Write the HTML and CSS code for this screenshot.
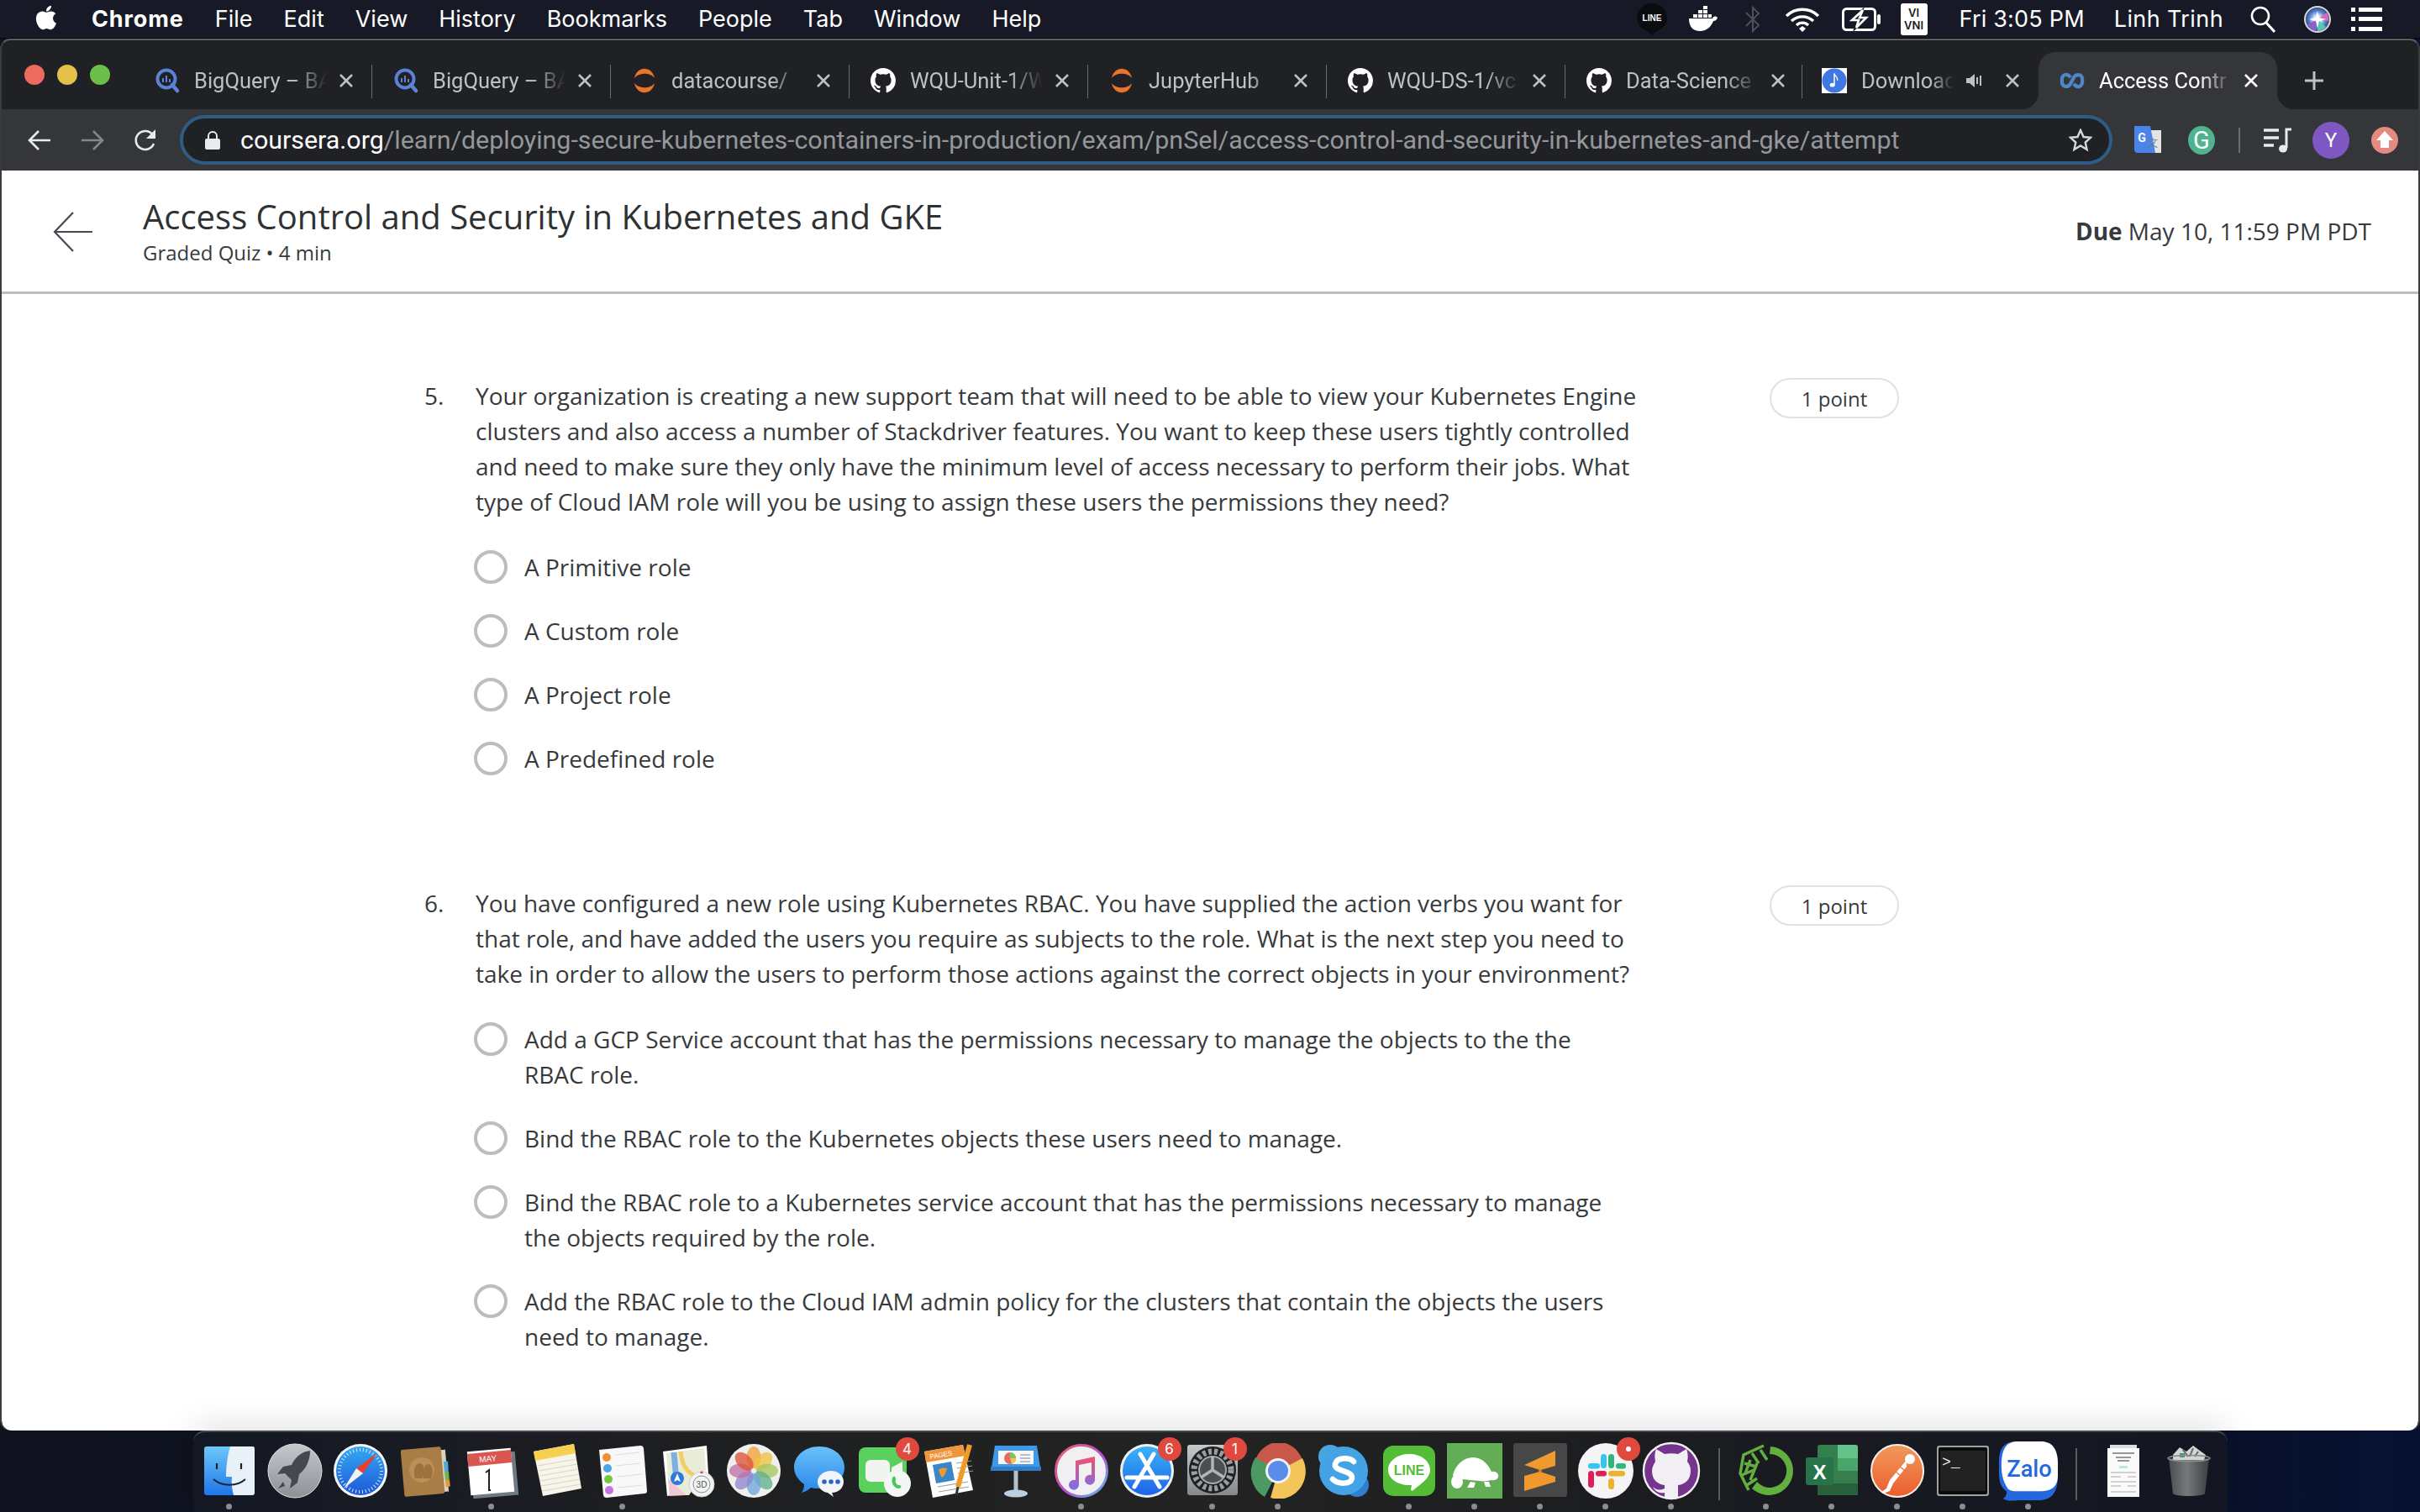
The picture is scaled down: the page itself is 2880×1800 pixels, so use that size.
FILE: index.html
```html
<!DOCTYPE html>
<html lang="en">
<head>
    <meta charset="UTF-8">
    <title>Access Control and Security in Kubernetes and GKE</title>
    <link rel="stylesheet" href="styles.css">
</head>
<body>

    <svg class="sprite">
        <symbol id="gh" viewBox="0 0 16 16"><path fill-rule="evenodd" d="M8 0C3.58 0 0 3.58 0 8c0 3.54 2.29 6.53 5.47 7.59.4.07.55-.17.55-.38 0-.19-.01-.82-.01-1.49-2.01.37-2.53-.49-2.69-.94-.09-.23-.48-.94-.82-1.13-.28-.15-.68-.52-.01-.53.63-.01 1.08.58 1.23.82.72 1.21 1.87.87 2.33.66.07-.52.28-.87.51-1.07-1.78-.2-3.64-.89-3.64-3.95 0-.87.31-1.59.82-2.15-.08-.2-.36-1.02.08-2.12 0 0 .67-.21 2.2.82.64-.18 1.32-.27 2-.27.68 0 1.36.09 2 .27 1.53-1.04 2.2-.82 2.2-.82.44 1.1.16 1.92.08 2.12.51.56.82 1.27.82 2.15 0 3.07-1.87 3.75-3.65 3.95.29.25.54.73.54 1.48 0 1.07-.01 1.93-.01 2.2 0 .21.15.46.55.38A8.013 8.013 0 0016 8c0-4.42-3.58-8-8-8z"/></symbol>
        <symbol id="bq" viewBox="0 0 28 30"><circle cx="13" cy="13" r="10.5" fill="none" stroke="#5a83d8" stroke-width="4"/><path d="M20 20l6 7" stroke="#5a83d8" stroke-width="4.5" stroke-linecap="round"/><path d="M9 12v5M13 9v8M17 13v4" stroke="#5a83d8" stroke-width="2"/></symbol>
        <symbol id="jup" viewBox="0 0 30 30"><path d="M3 12C6-3 24-3 27 12 22 5 8 5 3 12zM3 18c3 15 21 15 24 0-5 7-19 7-24 0z" fill="#e9752c"/></symbol>
        <symbol id="close" viewBox="0 0 18 18"><path d="M2 2l14 14M16 2L2 16" stroke="currentColor" stroke-width="2.6"/></symbol>
    </svg>

    <header class="menubar">
        <svg class="apple" viewBox="0 0 24 24"><path fill="#fff" d="M17.05 20.28c-.98.95-2.05.8-3.08.35-1.09-.46-2.09-.48-3.24 0-1.44.62-2.2.44-3.06-.35C2.79 15.25 3.51 7.59 9.05 7.31c1.35.07 2.29.74 3.08.8 1.18-.24 2.31-.93 3.57-.84 1.51.12 2.65.72 3.4 1.8-3.12 1.87-2.38 5.98.48 7.13-.57 1.5-1.31 2.99-2.54 4.09zM12.03 7.25c-.15-2.23 1.66-4.07 3.74-4.25.29 2.58-2.34 4.5-3.74 4.25z"/></svg>
        <nav class="menu-items">
            <span class="app-name">Chrome</span>
            <span>File</span>
            <span>Edit</span>
            <span>View</span>
            <span>History</span>
            <span>Bookmarks</span>
            <span>People</span>
            <span>Tab</span>
            <span>Window</span>
            <span>Help</span>
        </nav>
        <div class="status">
            <svg class="st st-line" viewBox="0 0 36 38"><path d="M18 0a18 17 0 0 1 6 33l-6 5-6-5A18 17 0 0 1 18 0z" fill="#0b0c10"/><text x="18" y="21" class="st-line-text">LINE</text></svg>
            <svg class="st st-docker" viewBox="0 0 36 32"><path fill="#fff" d="M1 15h28c1-3 4-3 6-1-1 3-3 4-5 4-3 8-9 12-16 12C6 30 1 25 1 15z"/><path fill="#fff" d="M6 10h5v4H6zM12 10h5v4h-5zM18 10h5v4h-5zM12 5h5v4h-5zM18 5h5v4h-5zM18 0h5v4h-5zM24 10h4v4h-4z"/></svg>
            <svg class="st st-bt" viewBox="0 0 20 32"><path d="M2 8l15 15-7 7V2l7 7L2 24" fill="none" stroke="#4d505a" stroke-width="2"/></svg>
            <svg class="st st-wifi" viewBox="0 0 42 30"><path d="M2 11a27 27 0 0 1 38 0M8 17a19 19 0 0 1 26 0M14 22a10 10 0 0 1 14 0" fill="none" stroke="#fff" stroke-width="3.4"/><path d="M17 26l4-3 4 3-4 4z" fill="#fff"/></svg>
            <svg class="st st-batt" viewBox="0 0 46 28"><rect x="1.500" y="1.500" width="38" height="25" rx="4" fill="none" stroke="#fff" stroke-width="3"/><rect x="42" y="8" width="4" height="12" rx="2" fill="#fff"/><path d="M27-1L8 16h9l-4 13 20-18h-10z" fill="#171a26"/><path d="M25 3L12 15h8l-3 9 12-12h-8z" fill="none" stroke="#fff" stroke-width="2.600"/></svg>
            <div class="vni"><span>VI</span><span>VNI</span></div>
            <span class="st-text st-clock">Fri 3:05 PM</span>
            <span class="st-text st-user">Linh Trinh</span>
            <svg class="st st-search" viewBox="0 0 30 32"><circle cx="12" cy="12" r="10" fill="none" stroke="#fff" stroke-width="2.6"/><path d="M19 20l10 11" stroke="#fff" stroke-width="3"/></svg>
            <svg class="st st-siri" viewBox="0 0 32 32"><defs><radialGradient id="siri"><stop offset="0" stop-color="#fff"/><stop offset=".3" stop-color="#d8e4f4"/><stop offset=".6" stop-color="#5f8fdc"/><stop offset="1" stop-color="#2e3e70"/></radialGradient></defs><circle cx="16" cy="16" r="15" fill="url(#siri)" stroke="#d7d8dc" stroke-width="2"/><path d="M16 16L27 8a14 14 0 0 1 2 10z" fill="#d86ab8"/><path d="M16 16L26 25a14 14 0 0 1-10 5z" fill="#58c8a8"/><path d="M16 16l-2 14A14 14 0 0 1 4 22z" fill="#8a62c8"/><path d="M16 6l2 8 8 2-8 2-2 8-2-8-8-2 8-2z" fill="#fff"/></svg>
            <svg class="st st-list" viewBox="0 0 37 30"><path fill="#fff" d="M0 1h5v5H0zM9 1h28v5H9zM0 12h5v5H0zM9 12h28v5H9zM0 24h5v5H0zM9 24h28v5H9z"/></svg>
        </div>
    </header>

    <div class="window">
        <div class="tabstrip">
            <div class="lights"><i class="red"></i><i class="yellow"></i><i class="green"></i></div>

            <div class="tab"><svg class="favicon"><use href="#bq"/></svg><span class="tab-title">BigQuery – BA</span><svg class="tab-close"><use href="#close"/></svg></div>
            <div class="tab"><svg class="favicon"><use href="#bq"/></svg><span class="tab-title">BigQuery – BA</span><svg class="tab-close"><use href="#close"/></svg></div>
            <div class="tab"><svg class="favicon"><use href="#jup"/></svg><span class="tab-title">datacourse/</span><svg class="tab-close"><use href="#close"/></svg></div>
            <div class="tab"><svg class="favicon gh-icon"><use href="#gh"/></svg><span class="tab-title">WQU-Unit-1/W</span><svg class="tab-close"><use href="#close"/></svg></div>
            <div class="tab"><svg class="favicon"><use href="#jup"/></svg><span class="tab-title">JupyterHub</span><svg class="tab-close"><use href="#close"/></svg></div>
            <div class="tab"><svg class="favicon gh-icon"><use href="#gh"/></svg><span class="tab-title">WQU-DS-1/vc</span><svg class="tab-close"><use href="#close"/></svg></div>
            <div class="tab tab-narrow"><svg class="favicon gh-icon"><use href="#gh"/></svg><span class="tab-title">Data-Science</span><svg class="tab-close"><use href="#close"/></svg></div>
            <div class="tab tab-audio">
                <svg class="favicon" viewBox="0 0 32 32"><rect width="32" height="32" fill="#fff"/><circle cx="16" cy="16" r="15.5" fill="#3f78e0"/><path d="M16 7v14" stroke="#fff" stroke-width="1.6"/><path d="M16 7c1 4 5 4 4 9" fill="none" stroke="#fff" stroke-width="1.4"/><ellipse cx="13.5" cy="21.5" rx="3.2" ry="2.5" fill="#fff"/></svg>
                <span class="tab-title">Download</span>
                <svg class="speaker" viewBox="0 0 20 20"><path d="M0 7h4l6-5v16l-6-5H0z" fill="#bdc1c6"/><path d="M13 6v8M17 4v12" stroke="#bdc1c6" stroke-width="2"/></svg>
                <svg class="tab-close"><use href="#close"/></svg>
            </div>
            <div class="tab active">
                <svg class="favicon" viewBox="0 0 32 20"><path d="M14 6C11 2 8 2 6 3 2 5 2 15 6 17c3 1 6 0 8-3M18 14c3 4 6 4 8 3 4-2 4-12 0-14-3-1-6 0-8 3L14 14" fill="none" stroke="#4f86c6" stroke-width="4.5"/></svg>
                <span class="tab-title">Access Contr</span>
                <svg class="tab-close"><use href="#close"/></svg>
            </div>
            <svg class="newtab" viewBox="0 0 24 24"><path d="M12 1v22M1 12h22" stroke="#bdc1c6" stroke-width="3"/></svg>
        </div>

        <div class="toolbar">
            <svg class="nav-btn" viewBox="0 0 28 26"><path d="M27 13H3M13 2L2 13l11 11" fill="none" stroke="#e8eaed" stroke-width="2.6"/></svg>
            <svg class="nav-btn dim" viewBox="0 0 28 26"><path d="M1 13h24M15 2l11 11-11 11" fill="none" stroke="#83868a" stroke-width="2.6"/></svg>
            <svg class="nav-btn" viewBox="0 0 28 28"><path d="M24 18a11 11 0 1 1-1-10" fill="none" stroke="#e8eaed" stroke-width="2.6"/><path d="M26 1v11H15z" fill="#e8eaed"/></svg>

            <div class="omnibox">
                <svg class="lock" viewBox="0 0 18 22"><path d="M4 9V6a5 5 0 0 1 10 0v3" fill="none" stroke="#e8eaed" stroke-width="2"/><rect y="9" width="18" height="13" rx="2" fill="#e8eaed"/></svg>
                <span class="url"><b>coursera.org</b>/learn/deploying-secure-kubernetes-containers-in-production/exam/pnSel/access-control-and-security-in-kubernetes-and-gke/attempt</span>
                <svg class="star" viewBox="0 0 28 28"><path d="M14 2l3.6 8 8.4.8-6.3 5.7 1.9 8.5L14 20.5 6.4 25l1.9-8.5L2 10.800l8.400-.8z" fill="none" stroke="#d5d7da" stroke-width="2.400"/></svg>
            </div>

            <div class="extensions">
                <svg class="ext ext-translate" viewBox="0 0 32 34"><rect x="12" y="5" width="20" height="27" fill="#e4e4e4"/><path d="M0 0h19l6 32H4a4 4 0 0 1-4-4z" fill="#4a84e8"/><text x="9" y="19" class="ext-g">G</text><text x="22" y="25" class="ext-t">文</text></svg>
                <span class="ext-grammarly">G</span>
                <i class="ext-sep"></i>
                <svg class="ext ext-queue" viewBox="0 0 34 30"><path d="M0 3h18M0 12h18M0 21h12" stroke="#e8eaed" stroke-width="3.600"/><path d="M27 24V2h6" fill="none" stroke="#e8eaed" stroke-width="3"/><ellipse cx="23" cy="25" rx="5" ry="4.500" fill="#e8eaed"/></svg>
                <span class="avatar">Y</span>
                <svg class="ext ext-up" viewBox="0 0 32 32"><circle cx="16" cy="16" r="16" fill="#e58a7e"/><path d="M16 5l10 11h-5v9H11v-9H6z" fill="#fff"/></svg>
            </div>
        </div>

        <div class="page">
            <div class="page-header">
                <svg class="back" viewBox="0 0 48 48"><path d="M47 24H2M24 1L2 24l22 23" fill="none" stroke="#454a52" stroke-width="2.200"/></svg>
                <div class="page-title">
                    <h1>Access Control and Security in Kubernetes and GKE</h1>
                    <p>Graded Quiz • 4 min</p>
                </div>
                <div class="due"><b>Due</b> May 10, 11:59 PM PDT</div>
            </div>

            <main class="quiz">
                <section class="question">
                    <div class="q-num">5.</div>
                    <div class="q-body">
                        <p class="q-text">Your organization is creating a new support team that will need to be able to view your Kubernetes Engine clusters and also access a number of Stackdriver features. You want to keep these users tightly controlled and need to make sure they only have the minimum level of access necessary to perform their jobs. What type of Cloud IAM role will you be using to assign these users the permissions they need?</p>
                        <div class="option"><i class="radio"></i><span>A Primitive role</span></div>
                        <div class="option"><i class="radio"></i><span>A Custom role</span></div>
                        <div class="option"><i class="radio"></i><span>A Project role</span></div>
                        <div class="option"><i class="radio"></i><span>A Predefined role</span></div>
                    </div>
                    <div class="points">1 point</div>
                </section>

                <section class="question">
                    <div class="q-num">6.</div>
                    <div class="q-body">
                        <p class="q-text">You have configured a new role using Kubernetes RBAC. You have supplied the action verbs you want for that role, and have added the users you require as subjects to the role. What is the next step you need to take in order to allow the users to perform those actions against the correct objects in your environment?</p>
                        <div class="option"><i class="radio"></i><span>Add a GCP Service account that has the permissions necessary to manage the objects to the the RBAC role.</span></div>
                        <div class="option"><i class="radio"></i><span>Bind the RBAC role to the Kubernetes objects these users need to manage.</span></div>
                        <div class="option"><i class="radio"></i><span>Bind the RBAC role to a Kubernetes service account that has the permissions necessary to manage the objects required by the role.</span></div>
                        <div class="option"><i class="radio"></i><span>Add the RBAC role to the Cloud IAM admin policy for the clusters that contain the objects the users need to manage.</span></div>
                    </div>
                    <div class="points">1 point</div>
                </section>
            </main>
        </div>
    </div>

    <footer class="dock">
        <div class="slot on"><svg viewBox="0 0 66 66"><defs><linearGradient id="fnd" x1="0" y1="0" x2="0" y2="1"><stop offset="0" stop-color="#6cc8f8"/><stop offset="1" stop-color="#1f76e8"/></linearGradient></defs><rect x="3" y="4" width="60" height="58" rx="3" fill="url(#fnd)"/><path d="M34 4h26a3 3 0 0 1 3 3v52a3 3 0 0 1-3 3H38c-2-8-3-14-2-22h-7c0-12 2-26 5-36z" fill="#e9f1f8"/><path d="M18 24v7M47 24v7" stroke="#222" stroke-width="2.200"/><path d="M14 43c10 9 28 9 38 0" fill="none" stroke="#16233c" stroke-width="2"/></svg></div>
        <div class="slot"><svg viewBox="0 0 66 66"><defs><linearGradient id="lp" x1="0" y1="0" x2="0" y2="1"><stop offset="0" stop-color="#c3c8cc"/><stop offset="1" stop-color="#8b9195"/></linearGradient></defs><circle cx="33" cy="33" r="32" fill="url(#lp)" stroke="#dfe2e4" stroke-width="1"/><path d="M51 9c-10 1-18 8-22 17l-10 2-7 9 9-1 8 8-2 10 9-7 2-10c8-6 13-16 13-28z" fill="#45484c"/><path d="M19 46l-6 8 8-3z" fill="#45484c"/></svg></div>
        <div class="slot"><svg viewBox="0 0 66 66"><defs><linearGradient id="sf" x1="0" y1="0" x2="0" y2="1"><stop offset="0" stop-color="#33a9f0"/><stop offset="1" stop-color="#1d58d8"/></linearGradient></defs><circle cx="33" cy="33" r="32" fill="#f4f6f8"/><circle cx="33" cy="33" r="29" fill="url(#sf)"/><circle cx="33" cy="33" r="25" fill="none" stroke="#dce9f8" stroke-width="4" stroke-dasharray="1 3"/><path d="M53 12L36 36 28 30z" fill="#e8402f"/><path d="M13 54l15-24 8 6z" fill="#f2f2f2"/></svg></div>
        <div class="slot"><svg viewBox="0 0 66 66"><rect x="48" y="8" width="10" height="50" fill="#d8d2bd" transform="rotate(-5 53 33)"/><path d="M54 22l5-.4.8 12-5 .4z" fill="#4fa8d8"/><path d="M55 34l5-.4.800 10-5 .4z" fill="#6cb54c"/><path d="M56 44l5-.4.800 8-5 .4z" fill="#e59a34"/><rect x="5" y="6" width="48" height="56" rx="2" fill="#a97d45" transform="rotate(-5 29 34)"/><circle cx="28" cy="32" r="15" fill="#ba8f58"/><path d="M20 42c-3-9 0-18 6-18 4 0 6 7 3 18zM30 42c-1-10 1-18 6-17 5 1 6 9 3 17z" fill="#9c733d"/></svg></div>
        <div class="slot on"><svg viewBox="0 0 66 66"><rect x="9" y="12" width="54" height="52" fill="#6e7a84" transform="rotate(-5 36 38)"/><rect x="6" y="8" width="52" height="52" fill="#fff" transform="rotate(-5 32 34)"/><path d="M4 13l52-5 1.300 15-52 5z" fill="#d9574f"/><text x="29" y="22" class="dock-text cal-month" transform="rotate(-5 29 22)">MAY</text><path d="M26 35l4-3v24h2" fill="none" stroke="#222" stroke-width="2"/></svg></div>
        <div class="slot"><svg viewBox="0 0 66 66"><path d="M5 10l48-9 9 53-46 9z" fill="#f7f4e9"/><path d="M5 10l48-9 2 11-48 9z" fill="#f6d14f"/><path d="M10 27l46-8M11 33l46-8M12 39l46-8M13 45l46-8M14 51l46-8M15 57l46-8" stroke="#d8d5c8" stroke-width="1.200"/></svg></div>
        <div class="slot on"><svg viewBox="0 0 66 66"><path d="M5 8l49-5a4 4 0 0 1 4 3l4 51a3 3 0 0 1-3 3L14 65a4 4 0 0 1-4-3z" fill="#f8f8f8"/><circle cx="14" cy="17" r="5" fill="#f09034"/><circle cx="15" cy="30" r="5" fill="#49a5e8"/><circle cx="16" cy="43" r="5" fill="#70c83c"/><circle cx="17" cy="56" r="5" fill="#c274e0"/><path d="M24 14l29-3M25 27l29-3M26 40l30-3M27 53l30-3" stroke="#ddd" stroke-width="1"/></svg></div>
        <div class="slot"><svg viewBox="0 0 66 66"><path d="M3 10l52-7 3 50-50 10z" fill="#fff"/><path d="M7 12l45-6 2 26-20 30-24 0z" fill="#e8edd8"/><path d="M24 10c2 20 10 30 30 32" fill="none" stroke="#f3ce65" stroke-width="5"/><path d="M16 11l3 34" stroke="#7eb0df" stroke-width="7"/><path d="M9 42l22 20-20 1z" fill="#f2c8d2"/><circle cx="20" cy="42" r="8" fill="#2f7ad8"/><path d="M20 36l4 10-4-2-4 2z" fill="#fff"/><circle cx="49" cy="49" r="15" fill="#f2f4f4" stroke="#ccc"/><text x="49" y="53" class="dock-text maps-3d">3D</text><circle cx="49" cy="49" r="10" fill="none" stroke="#8a8f94" stroke-width="1"/><path d="M49 33l2 3h-4z" fill="#d33"/></svg></div>
        <div class="slot"><svg viewBox="0 0 66 66"><circle cx="33" cy="33" r="32" fill="#efefee"/><g fill-opacity=".78"><ellipse cx="33" cy="17" rx="8.500" ry="13" fill="#f0a23e"/><ellipse cx="33" cy="17" rx="8.500" ry="13" fill="#eec340" transform="rotate(45 33 33)"/><ellipse cx="33" cy="17" rx="8.500" ry="13" fill="#a6c85a" transform="rotate(90 33 33)"/><ellipse cx="33" cy="17" rx="8.500" ry="13" fill="#5fb08a" transform="rotate(135 33 33)"/><ellipse cx="33" cy="17" rx="8.500" ry="13" fill="#6da7dc" transform="rotate(180 33 33)"/><ellipse cx="33" cy="17" rx="8.500" ry="13" fill="#8e86cc" transform="rotate(225 33 33)"/><ellipse cx="33" cy="17" rx="8.500" ry="13" fill="#c070a8" transform="rotate(270 33 33)"/><ellipse cx="33" cy="17" rx="8.500" ry="13" fill="#dd5438" transform="rotate(315 33 33)"/></g></svg></div>
        <div class="slot"><svg viewBox="0 0 66 66"><defs><linearGradient id="msg" x1="0" y1="0" x2="0" y2="1"><stop offset="0" stop-color="#6ac1fa"/><stop offset="1" stop-color="#2a86ea"/></linearGradient></defs><path d="M30 4c17 0 30 11 30 25 0 14-13 25-30 25-4 0-7 0-10-1-3 3-7 5-11 6 2-3 3-6 3-10C5 44 0 37 0 29 0 15 13 4 30 4z" fill="url(#msg)" transform="translate(3 0)"/><path d="M50 34c9 0 15 6 15 13s-6 13-14 13l2 5-7-5c-7-1-12-7-12-13 0-7 7-13 16-13z" fill="#f2f4f7" transform="translate(-3 -1)"/><circle cx="39" cy="46" r="2.800" fill="#2a69c8"/><circle cx="47" cy="46" r="2.800" fill="#2a69c8"/><circle cx="55" cy="46" r="2.800" fill="#2a69c8"/></svg></div>
        <div class="slot"><svg viewBox="0 0 66 66"><rect x="2" y="5" width="57" height="54" rx="8" fill="#5ad15c"/><rect x="10" y="20" width="29" height="26" rx="6" fill="#f1f4f0"/><path d="M41 29l13-7v22l-13-7z" fill="#f1f4f0"/><circle cx="48" cy="48" r="16" fill="#f3f6f2"/><path d="M43 40c2-1 3 0 3 3 0 2-1 2 0 4 1 2 2 3 4 3 2 0 3 1 2 3-3 2-6 1-9-3-2-4-2-8 0-10z" fill="#4cc458"/></svg><b class="badge">4</b></div>
        <div class="slot"><svg viewBox="0 0 66 66"><path d="M2 10l46-8 12 54-48 9z" fill="#fff"/><path d="M2 10l46-8 3 13-47 8z" fill="#f0953a"/><text x="9" y="19" class="dock-text pages-text" transform="rotate(-10 9 19)">PAGES</text><path d="M12 26l22-4 4 22-22 4z" fill="#3a86c8"/><path d="M19 32c3-3 6-3 10-2-1 5-3 9-6 11-2-3-3-6-4-9z" fill="#f09a30"/><path d="M40 24l18 -3M41 30l18-3M42 36l18-3M18 52l36-6M19 58l36-6" stroke="#999" stroke-width="1"/><path d="M56 2L42 52" stroke="#ef9b28" stroke-width="6"/><path d="M42 52l-2 10" stroke="#333" stroke-width="3"/></svg></div>
        <div class="slot"><svg viewBox="0 0 66 66"><path d="M33 32v26" stroke="#b7c0c8" stroke-width="5"/><ellipse cx="33" cy="60" rx="14" ry="4.500" fill="#bccfe0"/><path d="M8 3h50l4 26H4z" fill="#3e9ae8"/><rect x="3" y="28" width="60" height="5" fill="#2f7dc8"/><path d="M12 9h42v16H12z" fill="#f5f7f9"/><circle cx="26" cy="18" r="7" fill="#e86a5c"/><path d="M26 18V11a7 7 0 0 1 7 7z" fill="#78c65c"/><path d="M26 18h7a7 7 0 0 1-5 7z" fill="#f2c84a"/><path d="M38 14h12M38 18h12M38 22h12" stroke="#aab" stroke-width="1.500"/></svg></div>
        <div class="slot on"><svg viewBox="0 0 66 66"><defs><linearGradient id="mring" x1="0" y1="0" x2="1" y2="1"><stop offset="0" stop-color="#f25f58"/><stop offset=".55" stop-color="#b34fd0"/><stop offset="1" stop-color="#55c4f0"/></linearGradient><linearGradient id="mnote" x1="0" y1="0" x2="0" y2="1"><stop offset="0" stop-color="#f0526a"/><stop offset="1" stop-color="#7a6fe8"/></linearGradient></defs><circle cx="33" cy="33" r="30.500" fill="#f0f0f3" stroke="url(#mring)" stroke-width="3"/><path d="M26 21l23-5v28a6 6 0 1 1-4-6V23l-15 3v24a6 6 0 1 1-4-6z" fill="url(#mnote)"/></svg></div>
        <div class="slot"><svg viewBox="0 0 66 66"><defs><linearGradient id="as" x1="0" y1="0" x2="0" y2="1"><stop offset="0" stop-color="#39b3f8"/><stop offset="1" stop-color="#1e63e8"/></linearGradient></defs><circle cx="33" cy="33" r="32" fill="#eef1f4"/><circle cx="33" cy="33" r="29" fill="url(#as)"/><path d="M25 13l23 39M41 13L18 52M9 41h48" stroke="#fff" stroke-width="5" stroke-linecap="round"/></svg><b class="badge">6</b></div>
        <div class="slot on"><svg viewBox="0 0 66 66"><defs><linearGradient id="pr" x1="0" y1="0" x2="0" y2="1"><stop offset="0" stop-color="#c4c9ce"/><stop offset="1" stop-color="#85898d"/></linearGradient></defs><rect x="3" y="2" width="60" height="60" rx="3" fill="url(#pr)"/><circle cx="33" cy="32" r="28" fill="#1f2022"/><circle cx="33" cy="32" r="22" fill="none" stroke="#9a9da0" stroke-width="7" stroke-dasharray="4 3"/><circle cx="33" cy="32" r="16" fill="#4c4e51" stroke="#a5a8aa" stroke-width="2"/><path d="M33 32V16M33 32l14 9M33 32l-14 9" stroke="#b3b5b8" stroke-width="3.500"/></svg><b class="badge">1</b></div>
        <div class="slot on"><svg viewBox="0 0 66 66"><path d="M33 33L6 20A30 33 0 0 1 62 20z" fill="#c9574a"/><path d="M33 33L17 64A32 33 0 0 1 6 17z" fill="#4b9a63"/><path d="M33 33L62 18A32 33 0 0 1 24 65z" fill="#f4c65a"/><circle cx="33" cy="33" r="15" fill="#f2f2f2"/><circle cx="33" cy="33" r="12" fill="#5a8de8"/></svg></div>
        <div class="slot"><svg viewBox="0 0 66 66"><circle cx="17" cy="16" r="14" fill="#4aa4e0"/><circle cx="49" cy="50" r="14" fill="#2f7fd0"/><circle cx="33" cy="33" r="29" fill="#43a3e4"/><path d="M45 22c-4-5-20-6-22 3-2 9 20 7 20 16 0 9-17 8-23 2" fill="none" stroke="#fff" stroke-width="6.500" stroke-linecap="round"/></svg></div>
        <div class="slot on"><svg viewBox="0 0 66 66"><rect x="2" y="3" width="62" height="60" rx="12" fill="#54bc37"/><path d="M33 13c14 0 25 8 25 19 0 10-12 17-20 24-1 1-3 1-3-1l1-5h-3C19 50 8 42 8 32c0-11 11-19 25-19z" fill="#fff"/><text x="33" y="38" class="dock-text line-text">LINE</text></svg></div>
        <div class="slot on"><svg viewBox="0 0 66 66"><rect y="0" width="66" height="66" fill="#62ad56"/><path d="M7 38c3-12 13-21 24-21 12 0 19 10 22 17 3-1 7 0 8 4 1 4-3 7-8 6-5 1-10 2-14 1-7-1-15-1-20-2-5 0-10 1-12-5z" fill="#fff"/><ellipse cx="12" cy="46" rx="7" ry="8" fill="#fff"/><path d="M28 46l-4 7h8l2-6zM44 46l2 6h6l-2-6z" fill="#fff"/></svg></div>
        <div class="slot on"><svg viewBox="0 0 66 66"><rect x="1" width="64" height="64" rx="3" fill="#474747"/><path d="M14 26L51 9v18l-21 6 21 7v6L14 57V39l22-6-22-7z" fill="#f0992e"/></svg></div>
        <div class="slot on"><svg viewBox="0 0 66 66"><circle cx="33" cy="33" r="33" fill="#f5f5f5"/><rect x="27" y="13" width="7" height="17" rx="3.500" fill="#36c5f0" /><rect x="12" y="24" width="14" height="6.500" rx="3.200" fill="#36c5f0"/><rect x="36" y="13" width="7" height="17" rx="3.500" fill="#2eb67d"/><rect x="45" y="24" width="12" height="6.500" rx="3.200" fill="#2eb67d"/><rect x="12" y="33" width="7" height="20" rx="3.500" fill="#e01e5a"/><rect x="21" y="33" width="13" height="6.500" rx="3.200" fill="#e01e5a"/><rect x="36" y="33" width="20" height="6.500" rx="3.200" fill="#ecb22e"/><rect x="36" y="42" width="7" height="13" rx="3.500" fill="#ecb22e"/></svg><b class="badge badge-dot"></b></div>
        <div class="slot on"><svg class="wide" viewBox="0 0 68 72"><circle cx="34" cy="36" r="33" fill="#75348e" stroke="#f2f2f2" stroke-width="2.400"/><path d="M16 10l10 6c5-1 11-1 16 0l10-6c2 5 2 10 1 15 3 4 4 7 4 11 0 11-7 16-15 17v16H26v-7c-6 1-11-1-14-7 3 3 7 5 14 2v-4c-8-1-15-6-15-17 0-4 2-8 4-11-1-5-1-10 1-15z" fill="#f1eff3"/></svg></div>
        <i class="dock-sep"></i>
        <div class="slot on"><svg viewBox="0 0 66 66"><path d="M38 4a29 29 0 1 1-22 50l6-8a20 20 0 1 0 15-33z" fill="#62ae3f"/><path d="M30 3L6 14 2 36l10 20M26 8l8 12M16 12l8 12M7 24l14 4M4 38l14-6M10 50l12-8M14 20L8 36M22 24l-8 20" fill="none" stroke="#62ae3f" stroke-width="3.500"/></svg></div>
        <div class="slot on"><svg viewBox="0 0 66 66"><rect x="16" y="2" width="48" height="60" rx="3" fill="#33804c"/><path d="M40 2h21a3 3 0 0 1 3 3v13H40z" fill="#62c289"/><rect x="40" y="18" width="24" height="15" fill="#4aa56a"/><rect x="40" y="33" width="24" height="15" fill="#367e4e"/><rect x="16" y="48" width="48" height="14" fill="#28603c"/><rect x="2" y="17" width="33" height="33" rx="3" fill="#28744a"/><text x="18.500" y="43" class="dock-text xl-text">X</text></svg></div>
        <div class="slot on"><svg viewBox="0 0 66 66"><defs><linearGradient id="pm" x1="0" y1="0" x2="0" y2="1"><stop offset="0" stop-color="#f09a5c"/><stop offset="1" stop-color="#ec5d2e"/></linearGradient></defs><circle cx="33" cy="33" r="31" fill="url(#pm)" stroke="#f8f0ea" stroke-width="2"/><circle cx="48" cy="19" r="6" fill="#fff"/><path d="M44 20L24 44l-4 10-6 4 2 2 8-3 4-9 16-20z" fill="#fff"/><path d="M36 28l6 5M31 34l6 5" stroke="#ee7a40" stroke-width="1.500"/></svg></div>
        <div class="slot on"><svg viewBox="0 0 66 66"><rect x="2" y="3" width="62" height="60" rx="3" fill="#9ea0a4"/><rect x="4" y="5" width="58" height="56" rx="2" fill="#0b0b0c"/><rect x="6" y="9" width="54" height="48" fill="#222"/><text x="8" y="28" class="dock-text term-text">&gt;_</text></svg></div>
        <div class="slot on"><svg class="wide" viewBox="0 0 74 74"><path d="M22 1h30c14 0 21 9 21 28v15c0 20-8 29-24 29H24c-8 1-14 1-18-2 3-2 5-5 4-9C3 56 1 50 1 40V25C1 9 8 1 22 1z" fill="#2468e0"/><path d="M24 1h28c14 0 21 9 21 28v13c0 15-8 20-22 20H26c-6 0-10 0-14-3C6 50 4 42 4 30 4 10 10 1 24 1z" fill="#fff"/><text x="38" y="44" class="dock-text zalo-text">Zalo</text></svg></div>
        <i class="dock-sep"></i>
        <div class="slot"><svg viewBox="0 0 66 66"><path d="M17 2h32v6H17z" fill="#dcdcdc"/><rect x="14" y="6" width="38" height="58" fill="#fafafa"/><path d="M20 12h26M24 17h18M26 21h14" stroke="#777" stroke-width="1.500"/><path d="M28 27h10v3H28z" fill="#bfe8d8"/><path d="M18 35h30M18 40h12M38 40h10M18 46h30M18 51h12M38 51h10M18 58h30" stroke="#aaa" stroke-width="1"/></svg></div>
        <div class="slot"><svg viewBox="0 0 66 66"><defs><linearGradient id="tr" x1="0" y1="0" x2="1" y2="0"><stop offset="0" stop-color="#4c4d4f"/><stop offset=".45" stop-color="#77787a"/><stop offset="1" stop-color="#3d3e40"/></linearGradient></defs><path d="M9 18h48l-5 42c-1 4-37 4-38 0z" fill="url(#tr)"/><path d="M14 14l8-9 8 5 8-7 8 6 7 5-2 6H14z" fill="#d4d6d6"/><path d="M26 8l6 8M38 6l-4 10M44 10l-4 6" stroke="#666" stroke-width="2"/><path d="M22 12h6v5h-6z" fill="#3f9a70"/><ellipse cx="33" cy="18" rx="25" ry="3.500" fill="none" stroke="#8d8e90" stroke-width="1.500"/></svg></div>
    </footer>

</body>
</html>
```

FILE: styles.css
```css
* {
    margin: 0;
    padding: 0;
    box-sizing: border-box;
}
body {
    width: 2880px;
    height: 1800px;
    overflow: hidden;
    display: flex;
    flex-direction: column;
    align-items: center;
    background: linear-gradient(90deg, #10131f, #0b1023 85%, #071233);
    font-family: "Open Sans", sans-serif;
    color: #373a3c;
}
.sprite {
    display: none;
}

/* mac menu bar */
.menubar {
    width: 100%;
    height: 46px;
    flex: none;
    display: flex;
    align-items: center;
    padding-left: 36px;
    background: #171a26;
    border-bottom: 1px solid #08090d;
    color: #fff;
    font-family: Inter, "Liberation Sans", sans-serif;
    font-size: 27px;
}
.apple {
    width: 38px;
    height: 40px;
    margin-top: -4px;
}
.menu-items {
    display: flex;
    gap: 37px;
    margin-left: 35px;
}
.app-name {
    font-weight: 700;
    letter-spacing: 0.9px;
}
.status {
    margin-left: auto;
    display: flex;
    align-items: center;
    height: 100%;
}
.st { flex: none; }
.st-line { width: 36px; height: 38px; margin-right: 25px; }
.st-line-text {
    fill: #fff;
    font-family: "Liberation Sans", sans-serif;
    font-size: 10px;
    font-weight: 700;
    text-anchor: middle;
}
.st-docker { width: 36px; height: 32px; margin-right: 31px; }
.st-bt { width: 20px; height: 32px; margin-right: 28px; }
.st-wifi { width: 42px; height: 30px; margin-right: 26px; }
.st-batt { width: 46px; height: 28px; margin-right: 24px; }
.vni {
    width: 32px;
    height: 38px;
    margin-right: 38px;
    border-radius: 3px;
    background: #fff;
    color: #171a26;
    display: flex;
    flex-direction: column;
    align-items: center;
    justify-content: center;
    font-size: 13px;
    line-height: 15px;
    font-weight: 600;
}
.st-clock { margin-right: 35px; letter-spacing: 0.2px; }
.st-user { margin-right: 32px; letter-spacing: 0.4px; }
.st-search { width: 30px; height: 32px; margin-right: 34px; }
.st-siri { width: 32px; height: 32px; margin-right: 24px; }
.st-list { width: 37px; height: 30px; margin-right: 45px; }

/* browser window */
.window {
    width: 100%;
    height: 1657px;
    flex: none;
    display: flex;
    flex-direction: column;
    overflow: hidden;
    border-radius: 12px;
    background: #202124;
    border: 2px solid #3a3b3e;
    border-top-color: #5d5e60;
    border-bottom: 0;
}
.tabstrip {
    height: 82px;
    flex: none;
    display: flex;
    align-items: flex-end;
    font-family: Roboto, sans-serif;
    font-size: 25.5px;
    color: #bdc1c6;
}
.lights {
    width: 157px;
    height: 24px;
    flex: none;
    margin-bottom: 29px;
    padding-left: 27px;
    display: flex;
    gap: 15px;
}
.lights i {
    width: 24px;
    height: 24px;
    border-radius: 50%;
}
.red { background: #ee6a5f; }
.yellow { background: #e3c04a; }
.green { background: #6cc04a; }

.tab {
    width: 284px;
    height: 68px;
    flex: none;
    position: relative;
    display: flex;
    align-items: center;
    padding-left: 25px;
}
.tab::after {
    content: "";
    position: absolute;
    right: 0;
    top: 15px;
    width: 1px;
    height: 40px;
    background: #6a6c70;
}
.tab-narrow { width: 282px; }
.tab-audio { width: 281px; padding-left: 23px; }
.tab-audio::after { display: none; }
.favicon {
    width: 30px;
    height: 30px;
    flex: none;
    color: #fff;
    fill: currentColor;
}
.tab-title {
    width: 158px;
    flex: none;
    margin-left: 17px;
    white-space: nowrap;
    overflow: hidden;
    -webkit-mask-image: linear-gradient(90deg, #000 75%, transparent);
    mask-image: linear-gradient(90deg, #000 75%, transparent);
}
.tab-close {
    width: 18px;
    height: 18px;
    flex: none;
    margin-left: 14px;
    color: #bdc1c6;
}
.tab-audio .tab-title { width: 110px; }
.speaker {
    width: 20px;
    height: 20px;
    flex: none;
    margin-left: 15px;
    margin-right: 26px;
}
.tab-audio .tab-close { margin-left: 0; }
.tab.active {
    background: #35363a;
    border-radius: 20px 20px 0 0;
    color: #fff;
}
.tab.active .tab-close { color: #fff; }
.tab.active::before,
.tab.active::after {
    content: "";
    position: absolute;
    top: auto;
    bottom: 0;
    width: 20px;
    height: 20px;
}
.tab.active::before {
    left: -20px;
    background: radial-gradient(circle at 0 0, transparent 20px, #35363a 20.5px);
}
.tab.active::after {
    right: -20px;
    background: radial-gradient(circle at 100% 0, transparent 20px, #35363a 20.5px);
}
.newtab {
    width: 24px;
    height: 24px;
    margin: 0 0 22px 32px;
}

.toolbar {
    height: 73px;
    flex: none;
    display: flex;
    align-items: center;
    background: #35363a;
}
.nav-btn {
    width: 28px;
    height: 28px;
    flex: none;
    margin-left: 35px;
}
.nav-btn:first-child { margin-left: 31px; }
.omnibox {
    width: 2300px;
    height: 59px;
    flex: none;
    margin-left: 27px;
    padding: 0 20px 0 26px;
    display: flex;
    align-items: center;
    background: #202124;
    border: 4px solid #2f5c87;
    border-radius: 30px;
    font-family: Roboto, sans-serif;
    font-size: 30.4px;
    color: #94979b;
}
.lock {
    width: 18px;
    height: 22px;
    flex: none;
    margin-right: 24px;
}
.url b {
    font-weight: 400;
    color: #fff;
}
.star {
    width: 28px;
    height: 28px;
    margin-left: auto;
}
.extensions {
    display: flex;
    align-items: center;
    margin-left: 26px;
}
.ext { flex: none; }
.ext-translate { width: 32px; height: 34px; }
.ext-g {
    fill: #fff;
    font-family: Roboto, sans-serif;
    font-size: 14px;
    font-weight: 700;
    text-anchor: middle;
}
.ext-t {
    fill: #6b7a99;
    font-family: "Noto Sans CJK SC", sans-serif;
    font-size: 12px;
    text-anchor: middle;
}
.ext-grammarly {
    width: 32px;
    height: 34px;
    flex: none;
    margin-left: 32px;
    border-radius: 50%;
    background: #4fb38f;
    color: #fff;
    display: flex;
    align-items: center;
    justify-content: center;
    font-family: Roboto, sans-serif;
    font-size: 29px;
}
.ext-sep {
    width: 2px;
    height: 30px;
    margin-left: 28px;
    background: #6a6c70;
}
.ext-queue { width: 34px; height: 30px; margin-left: 28px; }
.avatar {
    width: 44px;
    height: 44px;
    flex: none;
    margin-left: 24px;
    border-radius: 50%;
    background: #7e57c2;
    color: #fff;
    display: flex;
    align-items: center;
    justify-content: center;
    font-family: Roboto, sans-serif;
    font-size: 24px;
}
.ext-up { width: 32px; height: 32px; margin-left: 26px; }

/* coursera page */
.page {
    flex: 1;
    min-height: 0;
    overflow: hidden;
    background: #fff;
    border-radius: 0 0 12px 12px;
}
.page-header {
    height: 147px;
    display: flex;
    align-items: center;
    padding: 0 56px 0 61px;
    border-bottom: 3px solid #bdbdbd;
}
.back {
    width: 48px;
    height: 48px;
    flex: none;
    margin-right: 59px;
    margin-top: 2px;
}
.page-title h1 {
    font-size: 40px;
    line-height: 50px;
    font-weight: 400;
    color: #2f3133;
}
.page-title p {
    font-size: 24px;
    line-height: 34px;
    margin-top: 1px;
}
.due {
    margin-left: auto;
    font-size: 28px;
}
.quiz {
    padding: 100px 0 0 503px;
    font-size: 28px;
    line-height: 42px;
}
.question {
    display: flex;
    align-items: flex-start;
    margin-bottom: 112px;
}
.q-num {
    width: 61px;
    flex: none;
}
.q-body {
    width: 1386px;
    flex: none;
}
.q-text {
    margin-bottom: 20px;
}
.option {
    display: flex;
    align-items: flex-start;
    padding: 17px 22px 17px 0;
}
.option span {
    margin-top: -1px;
    margin-bottom: 1px;
}
.radio {
    width: 40px;
    height: 40px;
    flex: none;
    margin-right: 20px;
    margin-left: -2px;
    border: 4px solid #bdbdbd;
    border-radius: 50%;
}
.points {
    width: 154px;
    height: 48px;
    flex: none;
    margin-left: 154px;
    padding-top: 2px;
    border: 2px solid #e1e1e1;
    border-radius: 24px;
    display: flex;
    align-items: center;
    justify-content: center;
    font-size: 24px;
}

/* dock */
.dock {
    width: 2421px;
    height: 97px;
    flex: none;
    position: relative;
    display: flex;
    align-items: flex-start;
    padding: 13px 0 0 4px;
    background: linear-gradient(90deg, #141824, #1e1f21 25%, #232323 50%, #1c1d20 70%, #131622);
    border-top: 2px solid #48494b;
    border-radius: 14px 14px 0 0;
    box-shadow: 0 -6px 40px rgba(0, 0, 0, 0.12);
}
.slot {
    width: 78px;
    flex: none;
    position: relative;
    display: flex;
    flex-direction: column;
    align-items: center;
}
.slot svg {
    width: 66px;
    height: 66px;
    flex: none;
}
.slot svg.wide {
    width: 72px;
    height: 72px;
    margin: -3px 0;
}
.slot.on::after {
    content: "";
    width: 7px;
    height: 7px;
    margin-top: 6px;
    border-radius: 50%;
    background: #8b8d90;
}
.dock-sep {
    width: 2px;
    height: 62px;
    flex: none;
    margin: 6px 16px 0 17px;
    background: #5a5b5e;
}
.badge {
    position: absolute;
    left: 52px;
    top: -7px;
    width: 28px;
    height: 28px;
    border-radius: 50%;
    background: #e0493d;
    color: #fff;
    display: flex;
    align-items: center;
    justify-content: center;
    font-family: Inter, sans-serif;
    font-size: 17px;
    font-weight: 400;
}
.badge-dot::after {
    content: "";
    width: 6px;
    height: 6px;
    border-radius: 50%;
    background: #fff;
}
.dock-text {
    font-family: "Liberation Sans", sans-serif;
    text-anchor: middle;
}
.cal-month { fill: #fff; font-size: 10px; }
.maps-3d { fill: #555; font-size: 10px; }
.pages-text { fill: #fff; font-size: 8px; text-anchor: start; }
.line-text { fill: #54bc37; font-size: 16px; font-weight: 700; }
.xl-text { fill: #fff; font-size: 24px; font-weight: 700; }
.term-text { fill: #eee; font-size: 18px; text-anchor: start; font-family: "Liberation Mono", monospace; }
.zalo-text { fill: #2468e0; font-size: 28px; font-family: Roboto, sans-serif; font-weight: 500; }
```
